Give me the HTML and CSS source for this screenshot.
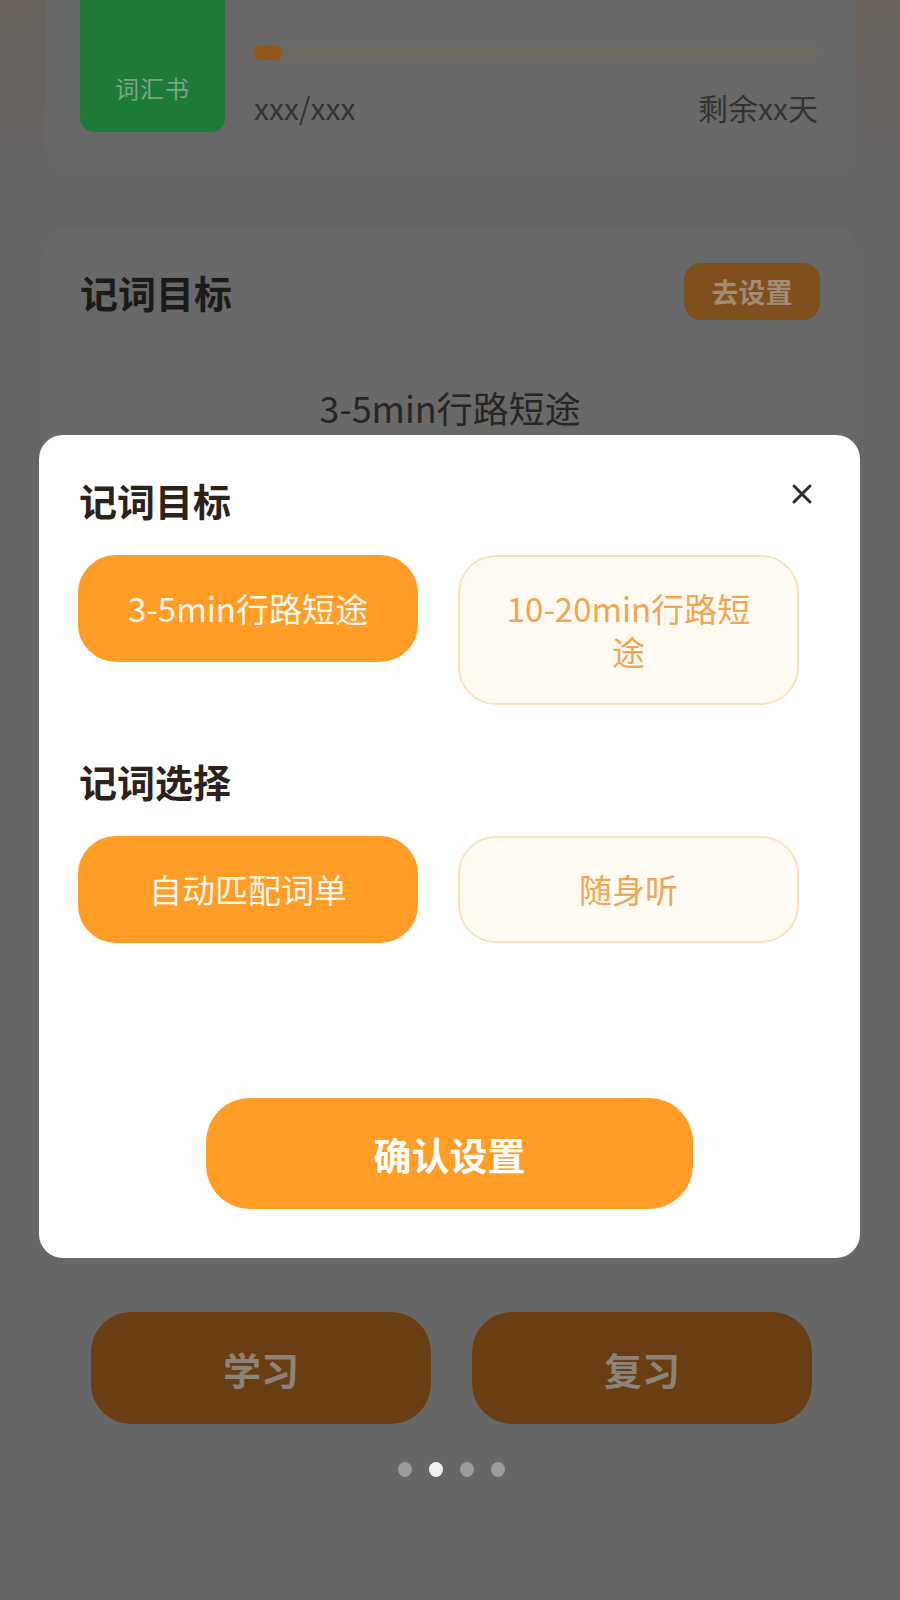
FILE: index.html
```html
<!DOCTYPE html>
<html lang="zh-CN">
<head>
  <meta charset="UTF-8">
  <title>记词目标</title>
  <link rel="stylesheet" href="styles.css">
</head>
<body>

  <div class="page">
    <!-- current word book -->
    <section class="card book-card">
      <div class="book-cover">词汇书</div>
      <div class="book-info">
        <div class="progress"><div class="progress-fill" style="width: 5%"></div></div>
        <div class="book-meta">
          <span>xxx/xxx</span>
          <span>剩余xx天</span>
        </div>
      </div>
    </section>

    <!-- goal card -->
    <section class="card goal-card">
      <div class="goal-head">
        <h2 class="goal-title">记词目标</h2>
        <button class="goal-set">去设置</button>
      </div>
      <p class="goal-value">3-5min行路短途</p>
    </section>

    <div class="actions">
      <button class="action-btn">学习</button>
      <button class="action-btn">复习</button>
    </div>

    <div class="dots">
      <span class="dot"></span>
      <span class="dot active"></span>
      <span class="dot"></span>
      <span class="dot"></span>
    </div>
  </div>

  <!-- settings dialog -->
  <div class="mask">
    <div class="dialog">
      <button class="dialog-close" aria-label="关闭">
        <svg width="22" height="22" viewBox="0 0 22 22">
          <path d="M3 3 L19 19 M19 3 L3 19" stroke="#2e2a26" stroke-width="3" stroke-linecap="round" fill="none"/>
        </svg>
      </button>

      <h3 class="dialog-title">记词目标</h3>
      <div class="options">
        <button class="option selected">3-5min行路短途</button>
        <button class="option">10-20min行路短途</button>
      </div>

      <h3 class="dialog-title section">记词选择</h3>
      <div class="options">
        <button class="option selected">自动匹配词单</button>
        <button class="option">随身听</button>
      </div>

      <button class="confirm">确认设置</button>
    </div>
  </div>

</body>
</html>
```

FILE: styles.css
```css
* {
  box-sizing: border-box;
}

body {
  margin: 0;
  font-family: "Noto Sans CJK SC", "Noto Sans", sans-serif;
  background: linear-gradient(to bottom, #6b645f 0, #686666 170px, #676767 260px);
  min-height: 1600px;
  overflow: hidden;
}

button {
  font-family: inherit;
  border: none;
  cursor: pointer;
}

.page {
  padding: 0 43px 0 46px;
}

.card {
  background: #696969;
  border: 1px solid #6b6967;
  border-radius: 20px;
}

/* --- word book card --- */
.book-card {
  display: flex;
  gap: 29px;
  margin-top: -62px;
  padding: 30px 38px 37px 33px;
}

.book-cover {
  width: 145px;
  height: 163px;
  flex-shrink: 0;
  background: #1e7a38;
  border-radius: 14px;
  color: #7aa886;
  font-size: 24px;
  letter-spacing: 1px;
  display: flex;
  align-items: flex-end;
  justify-content: center;
  padding-bottom: 27px;
}

.book-info {
  flex: 1;
  padding-top: 76px;
}

.progress {
  height: 15px;
  border-radius: 8px;
  background: #6e6a62;
}

.progress-fill {
  height: 100%;
  border-radius: 8px;
  background: #94581a;
}

.book-meta {
  display: flex;
  justify-content: space-between;
  margin-top: 27px;
  font-size: 30px;
  line-height: 40px;
  color: #333230;
}

/* --- goal card --- */
.goal-card {
  margin-top: 57px;
  height: 1010px;
  padding: 35px 36px 0 33px;
}

.goal-head {
  display: flex;
  align-items: center;
  justify-content: space-between;
}

.goal-title {
  margin: 0;
  font-size: 38px;
  line-height: 50px;
  font-weight: 700;
  color: #1b1a19;
}

.goal-set {
  width: 136px;
  height: 57px;
  border-radius: 17px;
  background: #80501c;
  color: #a08c78;
  font-size: 27px;
  font-weight: 700;
}

.goal-value {
  margin: 62px 0 0;
  text-align: center;
  font-size: 36px;
  line-height: 50px;
  color: #262523;
}

/* --- bottom actions --- */
.actions {
  display: grid;
  grid-template-columns: 340px 340px;
  gap: 41px;
  justify-content: center;
  margin-top: 75px;
}

.action-btn {
  height: 112px;
  border-radius: 40px;
  background: #693e13;
  color: #8d8379;
  font-size: 38px;
  font-weight: 700;
}

.dots {
  display: flex;
  justify-content: center;
  gap: 17px;
  margin-top: 38px;
}

.dot {
  width: 14px;
  height: 15px;
  border-radius: 50%;
  background: #9c9c9c;
}

.dot.active {
  background: #f1f1f1;
}

/* --- dialog --- */
.mask {
  position: fixed;
  inset: 0;
}

.dialog {
  position: absolute;
  left: 39px;
  top: 435px;
  width: 821px;
  height: 823px;
  background: #fff;
  border-radius: 24px;
  padding: 40px 61px 48px 39px;
}

.dialog-close {
  position: absolute;
  top: 48px;
  right: 47px;
  width: 22px;
  height: 22px;
  padding: 0;
  background: none;
  display: flex;
}

.dialog-title {
  margin: 0;
  padding-left: 1px;
  font-size: 38px;
  line-height: 50px;
  font-weight: 700;
  color: #2b2219;
}

.dialog-title.section {
  margin-top: 51px;
}

.options {
  display: grid;
  grid-template-columns: 340px 341px;
  gap: 40px;
  align-items: start;
  margin-top: 30px;
}

.option {
  padding: 30px 36px;
  border: 2px solid #fbe0be;
  border-radius: 38px;
  background: #fffbf3;
  color: #f2a654;
  font-size: 33px;
  line-height: 43px;
  text-align: center;
}

.option.selected {
  background: #ff9d27;
  border-color: #ff9d27;
  color: #fff7ea;
}

.confirm {
  display: block;
  width: 487px;
  height: 111px;
  margin: 155px auto 0;
  border-radius: 44px;
  background: #ff9d27;
  color: #fff;
  font-size: 38px;
  font-weight: 700;
  position: relative;
  left: 11px;
}
```
